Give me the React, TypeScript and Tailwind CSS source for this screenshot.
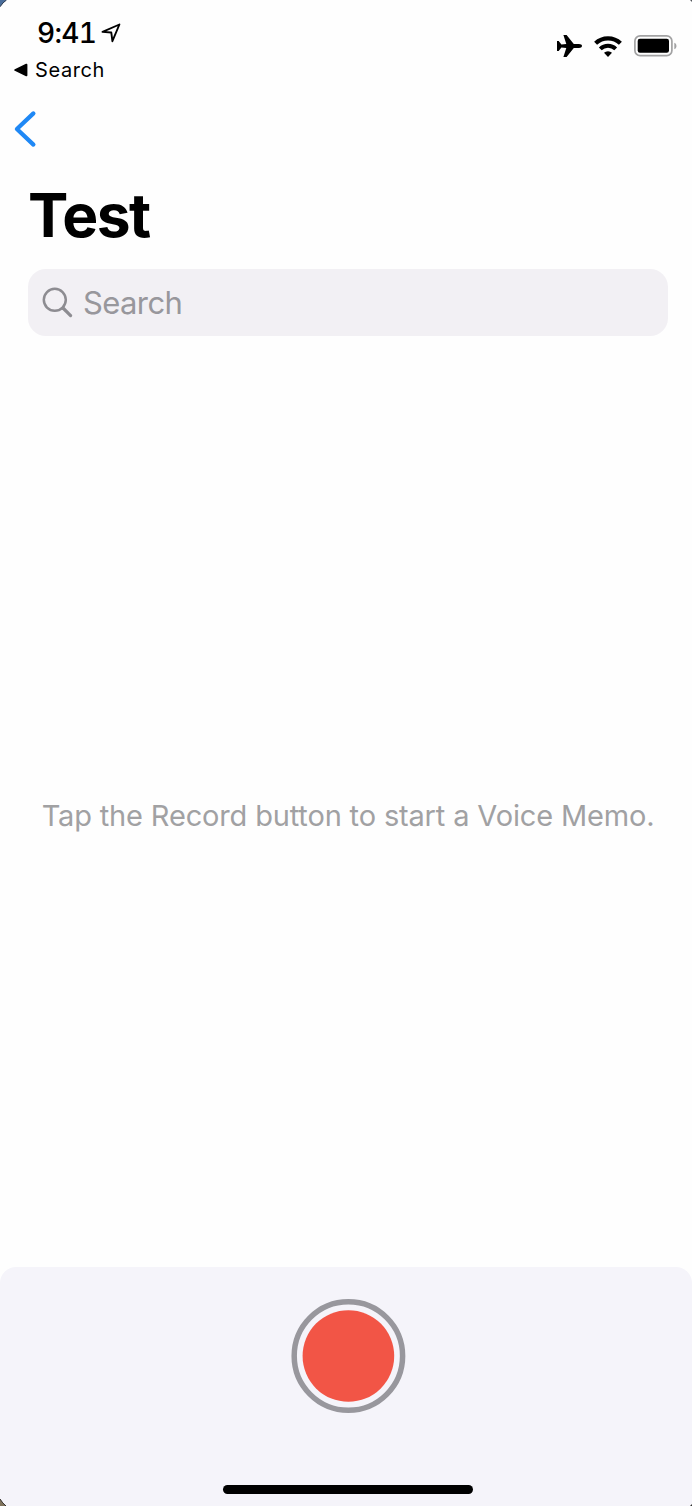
function StatusBar() {
  return (
    <header className="flex h-[84px] shrink-0 justify-between">
      <div className="pt-[17px]">
        <div className="flex h-8 items-center pl-[37px]">
          <span className="w-[64px] whitespace-nowrap text-[28px] font-medium tabular-nums leading-8 tracking-[-0.7px]">9:41</span>
          <svg width="20" height="20" viewBox="0 0 20 20" fill="none" stroke="black" strokeWidth="1.9" strokeLinejoin="round">
            <path d="M18.4 1.5 1.5 8.9l8.8.6 1.1 8.7z" />
          </svg>
        </div>
        <div className="flex h-[42px] items-center pl-3.5">
          <svg width="14" height="14" viewBox="0 0 14 14">
            <path d="M.8 6.2 12 .8q1.4-.5 1.4 1v10.4q0 1.5-1.4 1L.8 7.8q-1.3-.8 0-1.6Z" />
          </svg>
          <span className="ml-[7px] whitespace-nowrap text-[20px] leading-7 tracking-[0.6px]">Search</span>
        </div>
      </div>
      <div className="flex h-[92px] items-center pr-[15px]">
        <svg width="26" height="24" viewBox="0 0 26 24">
          <path d="M26 12c0 1.2-1.4 1.9-3 1.9h-5.2L10.6 23H7.4l2.9-9.1-4.9-.4L2.7 17H1V7h1.7l2.7 3.5 4.9-.4L7.4 1h3.2l7.2 9.1H23c1.6 0 3 .7 3 1.9Z" />
        </svg>
        <svg className="ml-3" width="28" height="21" viewBox="0 0 28 21" fill="none" stroke="black">
          <path d="M1.6 7.3a18 18 0 0 1 24.8 0" strokeWidth="4.3" />
          <path d="M6.3 12.9a11 11 0 0 1 15.4 0" strokeWidth="4" />
          <path d="M10 16.8a6 6 0 0 1 8 0L14 20.9Z" fill="black" stroke="none" />
        </svg>
        <svg className="ml-3" width="43" height="22" viewBox="0 0 43 22">
          <rect x=".9" y=".9" width="37" height="19.8" rx="5.2" fill="none" stroke="#a2a2a3" strokeWidth="1.7" />
          <rect x="3.7" y="3.7" width="31.3" height="14" rx="2.2" />
          <path d="M40.3 7.7c2.9 1 2.9 5.6 0 6.6Z" fill="#a2a2a3" />
        </svg>
      </div>
    </header>
  );
}

function RecordBar() {
  return (
    <footer className="flex h-[239px] shrink-0 flex-col items-center justify-between rounded-t-[16px] bg-[#f5f4fa] pb-[12px] pl-1 pt-[32px]">
      <button aria-label="Record">
        <svg className="overflow-visible" width="114" height="114" viewBox="0 0 114 114">
          <circle cx="57.4" cy="57" r="54.2" fill="none" stroke="#98979d" strokeWidth="5.5" />
          <circle cx="57.4" cy="57" r="45.8" fill="#f25546" />
        </svg>
      </button>
      <div className="h-[9px] w-[250px] rounded-full bg-black" />
    </footer>
  );
}

export default function App() {
  return (
    <div className="relative flex h-[1506px] w-[692px] flex-col overflow-hidden bg-[#fefefe] font-['Inter',sans-serif] text-black">
      <StatusBar />
      <nav className="flex h-[90px] shrink-0 items-center pl-3">
        <button aria-label="Back">
          <svg width="26" height="38" viewBox="0 0 26 38" fill="none" stroke="#1f88f5" strokeWidth="4.2" strokeLinecap="round" strokeLinejoin="round">
            <path d="M21.4 3.4 4.9 19l16.5 15.6" />
          </svg>
        </button>
      </nav>
      <h1 className="h-[95px] shrink-0 pl-[28px] text-[60.5px] font-bold leading-[83px] tracking-[-1.5px]">Test</h1>
      <div className="ml-7 flex h-[67px] w-[640px] shrink-0 items-center rounded-[18px] bg-[#f2f0f4] pl-3.5 text-[#8d8c91]">
        <svg width="32" height="32" viewBox="0 0 32 32" fill="none" stroke="currentColor" strokeLinecap="round">
          <circle cx="12.8" cy="12.8" r="11" strokeWidth="2.5" />
          <path d="m21 21 7.6 7.6" strokeWidth="3.2" />
        </svg>
        <span className="ml-[9px] text-[31px] leading-10 tracking-[-0.6px] text-[#98979c]">Search</span>
      </div>
      <main className="flex flex-1 items-center justify-center pl-1 pt-[29px]">
        <p className="whitespace-nowrap text-[29px] leading-10 tracking-[-0.16px] text-[#a1a1a3]">Tap the Record button to start a Voice Memo.</p>
      </main>
      <RecordBar />
      <svg className="absolute left-0 top-0" width="7" height="7" viewBox="0 0 7 7">
        <path d="M0 0h6.5Q3 2.2 0 6.8Z" fill="#496d9b" />
        <path d="M6.5 0Q3 2.2 0 6.8" fill="none" stroke="#26364b" />
      </svg>
      <svg className="absolute bottom-0 left-0" width="7" height="8" viewBox="0 0 7 8">
        <path d="M0 1Q2.5 5.2 6 8H0Z" fill="#80745d" />
        <path d="M0 1Q2.5 5.2 6 8" fill="none" stroke="#302d29" />
      </svg>
      <svg className="absolute bottom-0 right-0" width="2" height="2" viewBox="0 0 2 2">
        <path d="M2 0v2H0Z" fill="#30312f" />
      </svg>
      <svg className="absolute right-0 top-0" width="2" height="2" viewBox="0 0 2 2">
        <path d="M0 0h2v2Z" fill="#53565b" />
      </svg>
    </div>
  );
}
